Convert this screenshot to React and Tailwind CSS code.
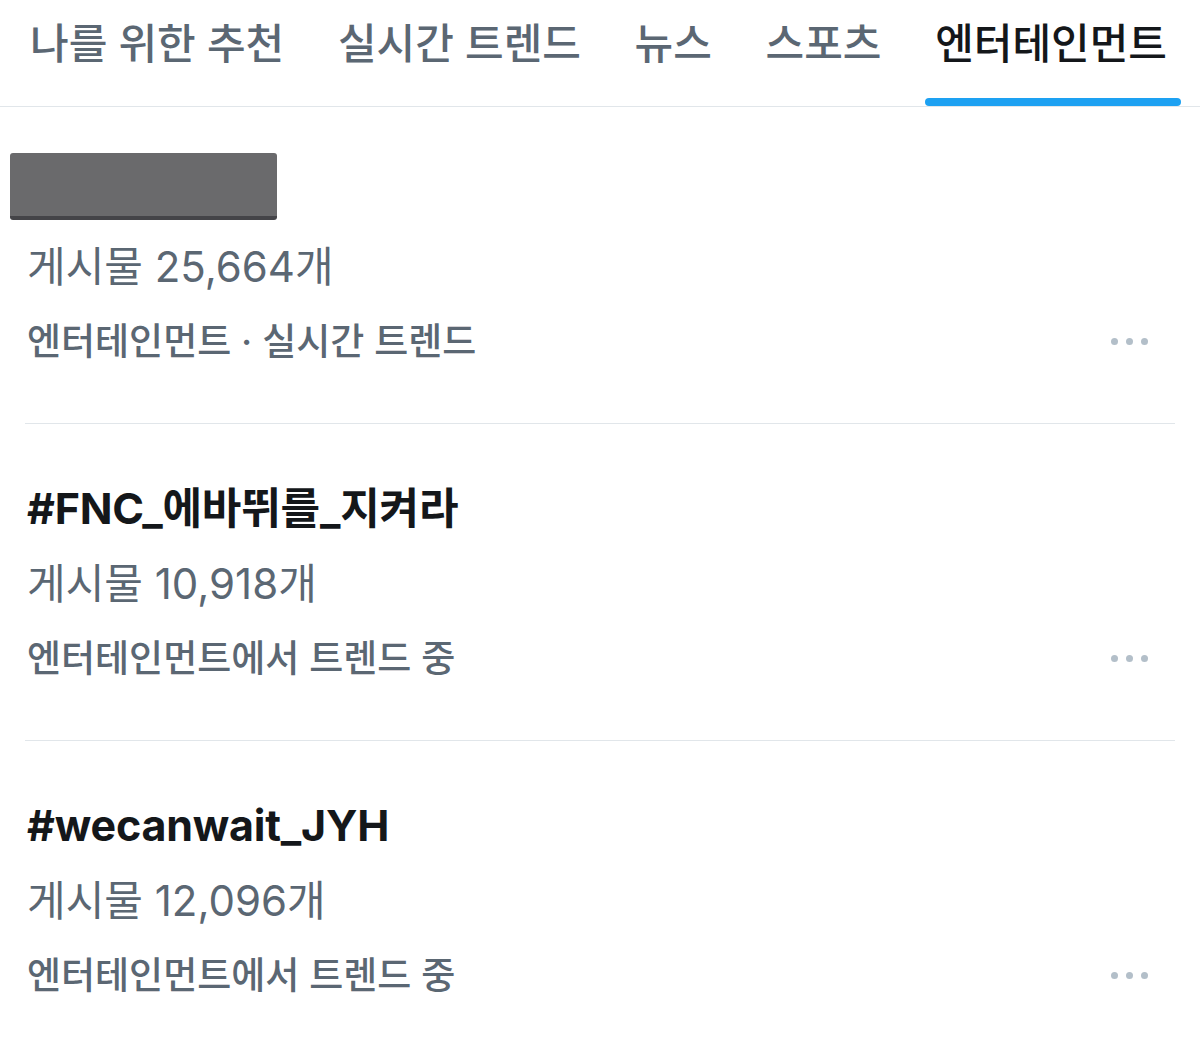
import React from 'react';

const tabs = ['나를 위한 추천', '실시간 트렌드', '뉴스', '스포츠', '엔터테인먼트'];

const font = { fontFamily: 'Inter, "Noto Sans CJK KR", sans-serif' };

const MoreDots = () => (
  <div className="flex items-center gap-[8px] pr-[2px]">
    <span className="w-[7px] h-[7px] rounded-full bg-[#b3bfc9]" />
    <span className="w-[7px] h-[7px] rounded-full bg-[#b3bfc9]" />
    <span className="w-[7px] h-[7px] rounded-full bg-[#b3bfc9]" />
  </div>
);

const TrendItem = ({ title, count, context, redacted = false, last = false }) => (
  <div className={`pl-[2px] pr-[25px] ${last ? '' : 'border-b border-[#e1e6ea]'} ${redacted ? 'pt-[46px]' : 'pt-[47px]'} pb-[44px]`}>
    {redacted ? (
      <div className="-ml-[17px] mb-[9px] w-[267px] h-[67px] rounded-[3px] bg-[#6a6a6c] border-b-[4px] border-[#444448]" />
    ) : (
      <div className="h-[75px] flex items-center text-[43px] font-bold text-[#14171a] tracking-[-0.2px]">
        {title}
      </div>
    )}
    <div className="h-[75px] flex items-center text-[42px] text-[#5b6773]">
      {count}
    </div>
    <div className="h-[75px] flex items-center justify-between">
      <span className="text-[37px] text-[#5b6773] font-medium">{context}</span>
      <MoreDots />
    </div>
  </div>
);

export default function App() {
  return (
    <div className="w-[1200px] h-[1053px] bg-white overflow-hidden" style={font}>
      <div className="flex justify-between pl-[30px] pr-[33px] border-b border-[#e1e6ea]">
        {tabs.map((t, i) => {
          const active = i === tabs.length - 1;
          return (
            <div key={t} className="flex flex-col">
              <div
                className={`h-[86px] flex items-center text-[42px] font-medium whitespace-nowrap ${
                  active ? 'text-[#14171a]' : 'text-[#5b6773]'
                }`}
              >
                {t}
              </div>
              <div className="h-[12px]" />
              <div className={`h-[8px] -ml-[10px] -mr-[14px] rounded-full ${active ? 'bg-[#1da1f2]' : 'bg-transparent'}`} />
            </div>
          );
        })}
      </div>
      <div className="mx-[25px]">
        <TrendItem redacted count="게시물 25,664개" context="엔터테인먼트 · 실시간 트렌드" />
        <TrendItem title="#FNC_에바뛰를_지켜라" count="게시물 10,918개" context="엔터테인먼트에서 트렌드 중" />
        <TrendItem title="#wecanwait_JYH" count="게시물 12,096개" context="엔터테인먼트에서 트렌드 중" last />
      </div>
    </div>
  );
}
